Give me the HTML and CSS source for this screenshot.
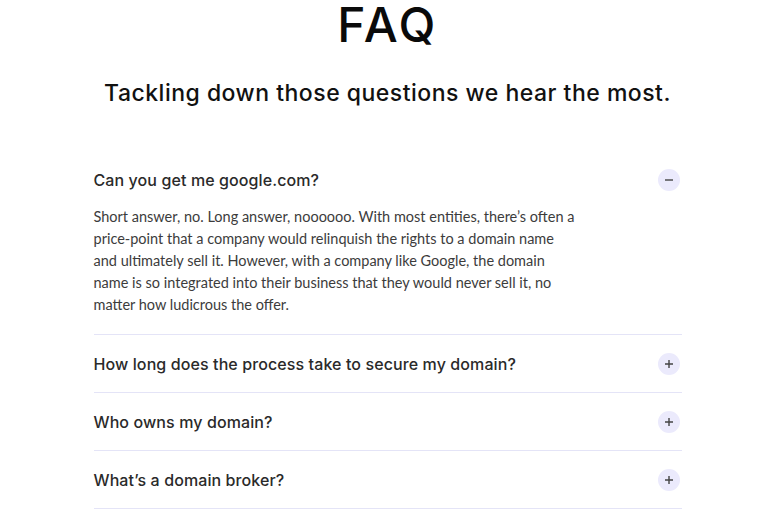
FILE: index.html
```html
<!DOCTYPE html>
<html lang="en">
<head>
<meta charset="utf-8">
<title>FAQ</title>
<link rel="stylesheet" href="styles.css">
</head>
<body>
<main class="faq">
  <h1 class="faq-title">FAQ</h1>
  <h2 class="faq-sub">Tackling down those questions we hear the most.</h2>
  <div class="faq-list">
    <div class="faq-item open">
      <div class="faq-q">
        <span>Can you get me google.com?</span>
        <span class="faq-btn"><svg width="10" height="10" viewBox="0 0 10 10"><path d="M1 5h8" stroke="#444" stroke-width="1.4"/></svg></span>
      </div>
      <p class="faq-a">Short answer, no. Long answer, noooooo. With most entities, there’s often a price-point that a company would relinquish the rights to a domain name and ultimately sell it. However, with a company like Google, the domain name is so integrated into their business that they would never sell it, no matter how ludicrous the offer.</p>
    </div>
    <div class="faq-item">
      <div class="faq-q">
        <span>How long does the process take to secure my domain?</span>
        <span class="faq-btn"><svg width="10" height="10" viewBox="0 0 10 10"><path d="M1 5h8M5 1v8" stroke="#444" stroke-width="1.4"/></svg></span>
      </div>
    </div>
    <div class="faq-item">
      <div class="faq-q">
        <span>Who owns my domain?</span>
        <span class="faq-btn"><svg width="10" height="10" viewBox="0 0 10 10"><path d="M1 5h8M5 1v8" stroke="#444" stroke-width="1.4"/></svg></span>
      </div>
    </div>
    <div class="faq-item">
      <div class="faq-q">
        <span>What’s a domain broker?</span>
        <span class="faq-btn"><svg width="10" height="10" viewBox="0 0 10 10"><path d="M1 5h8M5 1v8" stroke="#444" stroke-width="1.4"/></svg></span>
      </div>
    </div>
  </div>
</main>
</body>
</html>
```

FILE: styles.css
```css
html, body {
  margin: 0;
  padding: 0;
  background: #fff;
}
body {
  font-family: Inter, "Noto Sans", sans-serif;
  color: #141414;
}
.faq {
  width: 588px;
  margin: 0 auto;
}
.faq-title {
  margin: 0;
  font-size: 48px;
  font-weight: 500;
  line-height: 50px;
  letter-spacing: 2.5px;
  text-align: center;
  color: #0a0a0a;
}
.faq-sub {
  margin: 28px 0 0;
  font-size: 23px;
  font-weight: 500;
  line-height: 30px;
  text-align: center;
  color: #111;
  letter-spacing: 0.5px;
}
.faq-list {
  margin-top: 50px;
}
.faq-item {
  border-bottom: 1px solid #e4e4f7;
}
.faq-q {
  display: flex;
  justify-content: space-between;
  align-items: center;
  height: 57px;
  padding-right: 2px;
  font-size: 16px;
  font-weight: 500;
  letter-spacing: 0.1px;
  color: #2a2a2a;
}
.faq-item.open .faq-q {
  height: 44px;
}
.faq-btn {
  width: 22px;
  height: 22px;
  border-radius: 50%;
  background: #ebeafc;
  display: flex;
  align-items: center;
  justify-content: center;
}
.faq-a {
  margin: 0;
  padding: 4px 0 18px;
  max-width: 484px;
  font-family: Lato, "Noto Sans", sans-serif;
  font-size: 14.5px;
  line-height: 22px;
  color: #3c3c3c;
}
```
